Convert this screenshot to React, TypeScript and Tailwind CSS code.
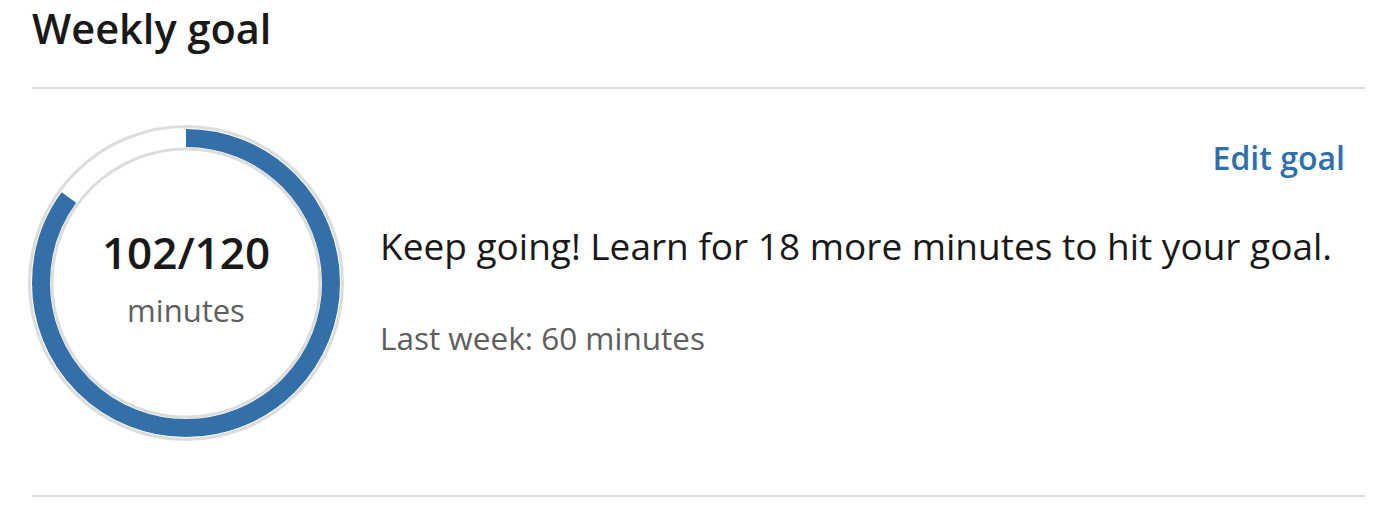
const FONT = { fontFamily: '"Open Sans", "Noto Sans", sans-serif' };

const GoalRing = ({ done, goal }: { done: number; goal: number }) => {
    const r = 145;
    const c = 2 * Math.PI * r;
    const filled = (done / goal) * c;
    return (
        <div className="relative w-[320px] h-[320px] shrink-0 -ml-[6px]">
            <svg width="320" height="320" viewBox="0 0 320 320">
                <circle cx="160" cy="160" r="156.5" fill="none" stroke="#dddddd" strokeWidth="3" />
                <circle cx="160" cy="160" r="134" fill="none" stroke="#dddddd" strokeWidth="3" />
                <circle
                    cx="160"
                    cy="160"
                    r={r}
                    fill="none"
                    stroke="#336fa8"
                    strokeWidth="18"
                    strokeDasharray={`${filled} ${c}`}
                    transform="rotate(-90 160 160)"
                />
            </svg>
            <div className="absolute inset-0 flex flex-col items-center justify-center pb-[10px]">
                <span className="text-[44px] leading-none font-semibold text-[#191919]">{done}/{goal}</span>
                <span className="text-[31px] leading-none mt-[21px] text-[#5e5e5e]">minutes</span>
            </div>
        </div>
    );
};

export default function App() {
    return (
        <div className="bg-white w-[1400px] h-[523px] pl-[32px] pr-[35px]" style={FONT}>
            <h2 className="text-[41.5px] font-semibold text-[#191919] leading-none pt-[8px] pb-[37px] border-b-2 border-[#dcdcdc]">
                Weekly goal
            </h2>
            <div className="flex items-start border-b-2 border-[#dcdcdc] h-[408px] pt-[34px]">
                <GoalRing done={102} goal={120} />
                <div className="flex-1 flex flex-col pl-[34px] pt-[19px]">
                    <a href="#" className="self-end text-[32px] font-semibold text-[#2f6fab] leading-none mr-[20px]">
                        Edit goal
                    </a>
                    <p className="text-[37px] text-[#191919] leading-none mt-[53px]">
                        Keep going! Learn for 18 more minutes to hit your goal.
                    </p>
                    <p className="text-[31.5px] text-[#5e5e5e] leading-none mt-[58px]">
                        Last week: 60 minutes
                    </p>
                </div>
            </div>
        </div>
    );
}
